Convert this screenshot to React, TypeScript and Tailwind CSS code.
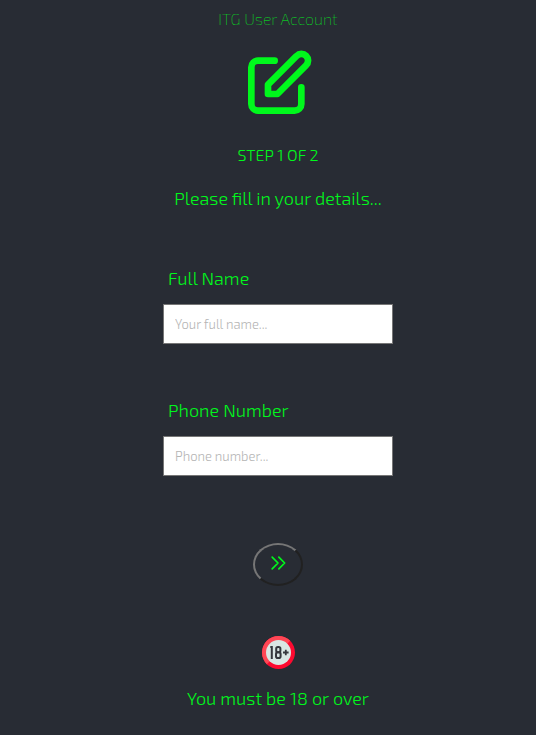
type FieldProps = { id: string; label: string; placeholder: string; type: string };

function Field({ id, label, placeholder, type }: FieldProps) {
  return (
    <div className="flex w-full flex-col">
      <label htmlFor={id} className="pl-[5px] text-lg leading-6">
        {label}
      </label>
      <input
        id={id}
        type={type}
        placeholder={placeholder}
        className="mt-[14px] h-10 w-full border border-[#767676] bg-white px-[11px] text-[13px] text-[#282c34] placeholder:text-[#b4b4b4]"
      />
    </div>
  );
}

function EditIcon() {
  return (
    <svg
      className="mt-[13px] size-20"
      viewBox="0 0 24 24"
      fill="none"
      stroke="currentColor"
      strokeWidth="2"
      strokeLinecap="round"
      strokeLinejoin="round"
      aria-hidden="true"
    >
      <path d="M11 5H6a2 2 0 00-2 2v11a2 2 0 002 2h11a2 2 0 002-2v-5m-1.414-9.414a2 2 0 112.828 2.828L11.828 15H9v-2.828l8.586-8.586z" />
    </svg>
  );
}

function AgeBadge() {
  return (
    <svg className="mt-12 size-9" viewBox="0 0 36 36" role="img" aria-label="18+">
      <circle cx="18.5" cy="18.5" r="16.5" fill="#fd0a30" />
      <path d="M6.8 30.2A16.5 16.5 0 0 1 30.2 6.8z" fill="#ff4755" />
      <circle cx="18.5" cy="18.5" r="12.5" fill="#d9e7e4" />
      <path d="M10.3 12.9h1.5v12" fill="none" stroke="#34383d" strokeWidth="2" />
      <rect x="16.2" y="13" width="4.2" height="5.2" rx="1.8" fill="none" stroke="#34383d" strokeWidth="2" />
      <rect x="16" y="18.2" width="4.6" height="5.8" rx="1.8" fill="none" stroke="#34383d" strokeWidth="2" />
      <path d="M25.8 15.7v5.6M23 18.5h5.6" stroke="#34383d" strokeWidth="1.8" />
    </svg>
  );
}

export default function App() {
  return (
    <main className="flex min-h-screen flex-col items-center bg-[#282c34] pt-[7px] pb-6 pl-5 font-['Exo_2',Roboto,sans-serif] font-light text-[#00f81c]">
      <h1 className="text-base leading-6 font-thin">ITG User Account</h1>
      <EditIcon />
      <p className="mt-[19px] text-base leading-6">STEP 1 OF 2</p>
      <h2 className="mt-[19px] text-lg leading-6">Please fill in your details...</h2>
      <form className="mt-14 flex w-[230px] flex-col items-center" onSubmit={(e) => e.preventDefault()}>
        <Field id="full-name" label="Full Name" placeholder="Your full name..." type="text" />
        <div className="h-[54px]" />
        <Field id="phone" label="Phone Number" placeholder="Phone number..." type="tel" />
        <button
          type="submit"
          aria-label="Next"
          className="mt-[67px] flex h-[43px] w-[50px] items-center justify-center rounded-[50%] border-2 border-t-[#767676] border-r-[#212121] border-b-[#212121] border-l-[#767676] pb-1"
        >
          <svg
            className="size-5"
            viewBox="0 0 24 24"
            fill="none"
            stroke="currentColor"
            strokeWidth="2"
            strokeLinecap="round"
            strokeLinejoin="round"
            aria-hidden="true"
          >
            <path d="M13 5l7 7-7 7M5 5l7 7-7 7" />
          </svg>
        </button>
      </form>
      <AgeBadge />
      <p className="mt-4 text-lg leading-6">You must be 18 or over</p>
    </main>
  );
}
